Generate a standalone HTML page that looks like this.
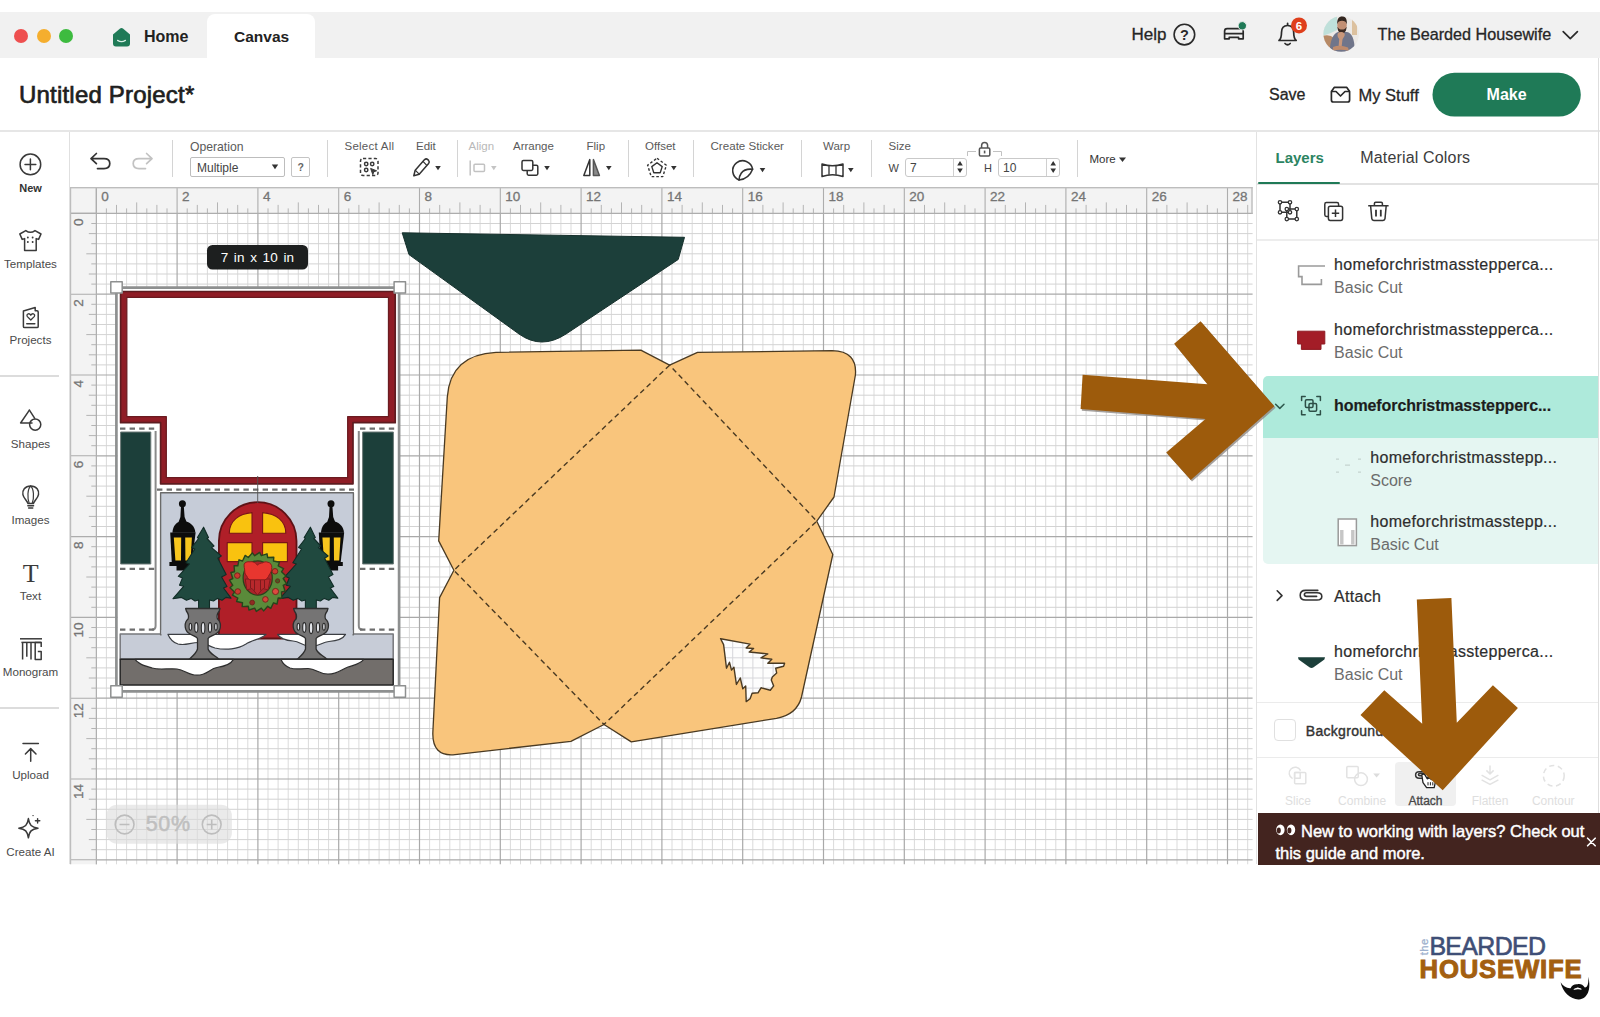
<!DOCTYPE html>
<html>
<head>
<meta charset="utf-8">
<title>Canvas</title>
<style>
*{box-sizing:border-box;margin:0;padding:0}
html,body{width:1600px;height:1017px;overflow:hidden;background:#fff}
body{font-family:"Liberation Sans",sans-serif;color:#222;position:relative}
svg{position:absolute;left:0;top:0;overflow:visible}
svg text{font-family:"Liberation Sans",sans-serif}
.t{position:absolute;white-space:nowrap;line-height:1}
.b{font-weight:bold}
#titlebar{position:absolute;left:0;top:12px;width:1600px;height:46px;background:#f1f1f1}
#tab{position:absolute;left:207px;top:14px;width:108px;height:46px;background:#fff;border-radius:8px 8px 0 0}
.dot{position:absolute;top:29px;width:14px;height:14px;border-radius:50%}
#hdrline{position:absolute;left:0;top:130px;width:1600px;height:2px;background:#e6e6e6}
#sidebar{position:absolute;left:0;top:132px;width:70px;height:732px;background:#fff;border-right:1px solid #e0e0e0}
.sb{position:absolute;left:0;width:61px;text-align:center;font-size:11px;color:#4a4a4a;line-height:1;white-space:nowrap}
.tl{position:absolute;font-size:11px;color:#5a5a5a;line-height:1;white-space:nowrap}
.vsep{position:absolute;top:140px;width:1px;height:37px;background:#d4d4d4}
#panel{position:absolute;left:1256px;top:132px;width:344px;height:732px;background:#fff;border-left:1px solid #e2e2e2}
.ln{position:absolute;font-size:16px;color:#2d2d2d;-webkit-text-stroke:.2px #2d2d2d;line-height:1;white-space:nowrap;letter-spacing:.31px}
.ls{position:absolute;font-size:16px;color:#6c6c6c;line-height:1;white-space:nowrap}
</style>
</head>
<body>
<div id="titlebar"></div>
<div id="tab"></div>
<div class="dot" style="left:14px;background:#ee4f4f"></div>
<div class="dot" style="left:37px;background:#f5ae2e"></div>
<div class="dot" style="left:59px;background:#3dbb3f"></div>
<svg width="1600" height="140" viewBox="0 0 1600 140">
<!-- home logo -->
<path d="M113 34.600 L119.800 28.700 Q121.500 27.300 123.200 28.700 L130 34.600 V43.600 Q130 46.500 127.100 46.500 H115.900 Q113 46.500 113 43.600 Z" fill="#1f7a57"/>
<path d="M117.600 40.400 Q121.500 43 125.400 40.400" fill="none" stroke="#d9f0e6" stroke-width="1.3" stroke-linecap="round"/>
<!-- help ? -->
<circle cx="1184.4" cy="34.6" r="10.3" fill="none" stroke="#2a2a2a" stroke-width="1.6"/>
<text x="1184.4" y="39.8" text-anchor="middle" font-size="14.5" font-weight="bold" fill="#2a2a2a">?</text>
<!-- machine -->
<g fill="none" stroke="#2a2a2a" stroke-width="1.700" stroke-linejoin="round" stroke-linecap="round">
<path d="M1224.600 38.800 V31.200 Q1224.600 28.700 1227.100 28.700 H1240.700 Q1243.200 28.700 1243.200 31.200 V38.800 H1238.600 V37.400 H1229.200 V38.800 Z"/>
<path d="M1224.800 33.700 H1243"/>
</g>
<circle cx="1242.3" cy="25.8" r="4.2" fill="#1f7a57" stroke="#f1f1f1" stroke-width="1"/>
<!-- bell -->
<g fill="none" stroke="#2a2a2a" stroke-width="1.7" stroke-linejoin="round" stroke-linecap="round">
<path d="M1279 40.5 C1281.5 38.5 1281.5 36 1281.5 32.5 C1281.5 28 1284 25.5 1287.6 25.5 C1291.2 25.5 1293.7 28 1293.7 32.5 C1293.7 36 1293.7 38.5 1296.2 40.5 Z"/>
<path d="M1285 43.500 Q1287.600 46 1290.200 43.500"/><path d="M1287.600 23.400 V25.200"/>
</g>
<circle cx="1299" cy="25.4" r="8" fill="#df3f1c"/>
<text x="1299" y="29.6" text-anchor="middle" font-size="11.5" font-weight="bold" fill="#fff">6</text>
<!-- avatar -->
<defs><clipPath id="av"><circle cx="1341.2" cy="34" r="17.8"/></clipPath></defs>
<g clip-path="url(#av)">
<rect x="1322" y="15" width="40" height="40" fill="#ece9e6"/>
<path d="M1322 15 H1337 V30 Q1330 34 1322 36 Z" fill="#bfe0da"/>
<path d="M1322 36 Q1330 34 1334 38 V55 H1322 Z" fill="#b78a66"/>
<rect x="1352" y="15" width="5" height="20" fill="#dcc19f"/>
<path d="M1330 55 C1329 42 1333 33.500 1338 32 H1347 C1352 33 1355.500 40 1354.500 55 Z" fill="#70758a"/>
<ellipse cx="1342" cy="25.200" rx="4.700" ry="6.200" fill="#c28f73"/>
<path d="M1337.100 24.500 C1337 18 1339.500 16.200 1342.200 16.200 C1345 16.200 1347.200 18 1346.900 24.500 C1346 21.500 1344.500 20.800 1342 20.800 C1339.500 20.800 1338 21.500 1337.100 24.500 Z" fill="#33261f"/>
<path d="M1337.400 26.500 C1337.600 31.500 1339.500 33.400 1342 33.400 C1344.500 33.400 1346.400 31.500 1346.600 26.500 C1345.500 29 1344 29.600 1342 29.600 C1340 29.600 1338.500 29 1337.400 26.500 Z" fill="#3d2c24"/>
<path d="M1338 33 C1339.500 31.600 1343 31.800 1344.500 33.500 C1345.500 36 1343 37.500 1342.400 40 L1341.600 47 L1338.600 46.500 L1339.200 39 C1337.500 37 1337 35 1338 33 Z" fill="#c8977b"/>
<path d="M1333 47 Q1340 44.500 1348 47.500 L1349 51 Q1340 48.500 1333 51 Z" fill="#bf8b6c"/>
</g>
<!-- chevron -->
<path d="M1563.2 31.6 L1570.3 38.6 L1577.4 31.6" fill="none" stroke="#2a2a2a" stroke-width="1.7" stroke-linecap="round" stroke-linejoin="round"/>
<!-- inbox -->
<g fill="none" stroke="#2a2a2a" stroke-width="1.7" stroke-linejoin="round">
<path d="M1331.4 91.5 L1334.2 87.4 H1346.8 L1349.6 91.5 V100 Q1349.6 102 1347.6 102 H1333.4 Q1331.400 102 1331.4 100 Z"/>
<path d="M1331.4 91.5 H1336 L1340.5 96 L1345 91.5 H1349.6"/>
</g>
<!-- make -->
<rect x="1432.5" y="72.8" width="148.3" height="43.8" rx="21.9" fill="#1f7a57"/>
<text x="1506.6" y="100.3" text-anchor="middle" font-size="16" font-weight="bold" fill="#fff">Make</text>
</svg>
<div class="t b" style="left:144px;top:28.5px;font-size:16px;color:#222">Home</div>
<div class="t b" style="left:234px;top:28.5px;font-size:15.5px;color:#222">Canvas</div>
<div class="t" style="left:1131.5px;top:25.5px;font-size:17px;color:#262626;-webkit-text-stroke:.3px #262626">Help</div>
<div class="t" style="left:1377.5px;top:26px;font-size:16.2px;color:#262626;-webkit-text-stroke:.3px #262626">The Bearded Housewife</div>
<div class="t" style="left:19px;top:82.500px;font-size:24px;color:#1e1e1e;-webkit-text-stroke:.7px #1e1e1e;letter-spacing:.2px">Untitled Project*</div>
<div class="t" style="left:1269px;top:87px;font-size:16px;color:#262626;-webkit-text-stroke:.3px #262626">Save</div>
<div class="t" style="left:1358.5px;top:86.5px;font-size:16.5px;color:#262626;-webkit-text-stroke:.3px #262626">My Stuff</div>
<div id="hdrline"></div>
<div style="position:absolute;left:1597.500px;top:58px;width:1.500px;height:75px;background:#dedede"></div>

<!-- canvas -->
<svg width="1600" height="1017" viewBox="0 0 1600 1017">
<defs><clipPath id="cv"><rect x="69.5" y="186" width="1183.6" height="678.6"/></clipPath></defs>
<g clip-path="url(#cv)">
<rect x="70" y="187" width="1182.6" height="677.6" fill="#fff"/>
<path d="M106.4 213.4V864.6M116.5 213.4V864.6M126.6 213.4V864.6M136.7 213.4V864.6M146.8 213.4V864.6M156.9 213.4V864.6M167.0 213.4V864.6M187.2 213.4V864.6M197.3 213.4V864.6M207.4 213.4V864.6M217.5 213.4V864.6M227.6 213.4V864.6M237.7 213.4V864.6M247.8 213.4V864.6M268.0 213.4V864.6M278.1 213.4V864.6M288.2 213.4V864.6M298.3 213.4V864.6M308.4 213.4V864.6M318.5 213.4V864.6M328.6 213.4V864.6M348.8 213.4V864.6M358.9 213.4V864.6M369.0 213.4V864.6M379.1 213.4V864.6M389.2 213.4V864.6M399.3 213.4V864.6M409.4 213.4V864.6M429.6 213.4V864.6M439.7 213.4V864.6M449.8 213.4V864.6M459.9 213.4V864.6M470.0 213.4V864.6M480.1 213.4V864.6M490.2 213.4V864.6M510.4 213.4V864.6M520.5 213.4V864.6M530.6 213.4V864.6M540.7 213.4V864.6M550.8 213.4V864.6M560.9 213.4V864.6M571.0 213.4V864.6M591.2 213.4V864.6M601.3 213.4V864.6M611.4 213.4V864.6M621.5 213.4V864.6M631.6 213.4V864.6M641.7 213.4V864.6M651.8 213.4V864.6M672.0 213.4V864.6M682.1 213.4V864.6M692.2 213.4V864.6M702.3 213.4V864.6M712.4 213.4V864.6M722.5 213.4V864.6M732.6 213.4V864.6M752.8 213.4V864.6M762.9 213.4V864.6M773.0 213.4V864.6M783.1 213.4V864.6M793.2 213.4V864.6M803.3 213.4V864.6M813.4 213.4V864.6M833.6 213.4V864.6M843.7 213.4V864.6M853.8 213.4V864.6M863.9 213.4V864.6M874.0 213.4V864.6M884.1 213.4V864.6M894.2 213.4V864.6M914.4 213.4V864.6M924.5 213.4V864.6M934.6 213.4V864.6M944.7 213.4V864.6M954.8 213.4V864.6M964.9 213.4V864.6M975.0 213.4V864.6M995.2 213.4V864.6M1005.3 213.4V864.6M1015.4 213.4V864.6M1025.5 213.4V864.6M1035.6 213.4V864.6M1045.7 213.4V864.6M1055.8 213.4V864.6M1076.0 213.4V864.6M1086.1 213.4V864.6M1096.2 213.4V864.6M1106.3 213.4V864.6M1116.4 213.4V864.6M1126.5 213.4V864.6M1136.6 213.4V864.6M1156.8 213.4V864.6M1166.9 213.4V864.6M1177.0 213.4V864.6M1187.1 213.4V864.6M1197.2 213.4V864.6M1207.3 213.4V864.6M1217.4 213.4V864.6M1237.6 213.4V864.6M1247.7 213.4V864.6" stroke="#dbdbdb" stroke-width="1" fill="none"/>
<path d="M96.3 223.5H1252.6M96.3 233.6H1252.6M96.3 243.7H1252.6M96.3 253.8H1252.6M96.3 263.9H1252.6M96.3 274.0H1252.6M96.3 284.1H1252.6M96.3 304.3H1252.6M96.3 314.4H1252.6M96.3 324.5H1252.6M96.3 334.6H1252.6M96.3 344.7H1252.6M96.3 354.8H1252.6M96.3 364.9H1252.6M96.3 385.1H1252.6M96.3 395.2H1252.6M96.3 405.3H1252.6M96.3 415.4H1252.6M96.3 425.5H1252.6M96.3 435.6H1252.6M96.3 445.7H1252.6M96.3 465.9H1252.6M96.3 476.0H1252.6M96.3 486.1H1252.6M96.3 496.2H1252.6M96.3 506.3H1252.6M96.3 516.4H1252.6M96.3 526.5H1252.6M96.3 546.7H1252.6M96.3 556.8H1252.6M96.3 566.9H1252.6M96.3 577.0H1252.6M96.3 587.1H1252.6M96.3 597.2H1252.6M96.3 607.3H1252.6M96.3 627.5H1252.6M96.3 637.6H1252.6M96.3 647.7H1252.6M96.3 657.8H1252.6M96.3 667.9H1252.6M96.3 678.0H1252.6M96.3 688.1H1252.6M96.3 708.3H1252.6M96.3 718.4H1252.6M96.3 728.5H1252.6M96.3 738.6H1252.6M96.3 748.7H1252.6M96.3 758.8H1252.6M96.3 768.9H1252.6M96.3 789.1H1252.6M96.3 799.2H1252.6M96.3 809.3H1252.6M96.3 819.4H1252.6M96.3 829.5H1252.6M96.3 839.6H1252.6M96.3 849.7H1252.6" stroke="#d3d3d3" stroke-width="1" fill="none"/>
<path d="M96.3 213.4V864.6M177.1 213.4V864.6M257.9 213.4V864.6M338.7 213.4V864.6M419.5 213.4V864.6M500.3 213.4V864.6M581.1 213.4V864.6M661.9 213.4V864.6M742.7 213.4V864.6M823.5 213.4V864.6M904.3 213.4V864.6M985.1 213.4V864.6M1065.9 213.4V864.6M1146.7 213.4V864.6M1227.5 213.4V864.6M96.3 213.4H1252.6M96.3 294.2H1252.6M96.3 375.0H1252.6M96.3 455.8H1252.6M96.3 536.6H1252.6M96.3 617.4H1252.6M96.3 698.2H1252.6M96.3 779.0H1252.6M96.3 859.8H1252.6" stroke="#a9a9a9" stroke-width="1.2" fill="none"/>
<rect x="70" y="187" width="1182.6" height="26.400000000000006" fill="#f3f3f3"/>
<rect x="70" y="187" width="26.299999999999997" height="677.6" fill="#f3f3f3"/>
<path d="M106.4 213.4v-5M116.5 213.4v-8.5M126.6 213.4v-5M136.7 213.4v-11M146.8 213.4v-5M156.9 213.4v-8.5M167.0 213.4v-5M187.2 213.4v-5M197.3 213.4v-8.5M207.4 213.4v-5M217.5 213.4v-11M227.6 213.4v-5M237.7 213.4v-8.5M247.8 213.4v-5M268.0 213.4v-5M278.1 213.4v-8.5M288.2 213.4v-5M298.3 213.4v-11M308.4 213.4v-5M318.5 213.4v-8.5M328.6 213.4v-5M348.8 213.4v-5M358.9 213.4v-8.5M369.0 213.4v-5M379.1 213.4v-11M389.2 213.4v-5M399.3 213.4v-8.5M409.4 213.4v-5M429.6 213.4v-5M439.7 213.4v-8.5M449.8 213.4v-5M459.9 213.4v-11M470.0 213.4v-5M480.1 213.4v-8.5M490.2 213.4v-5M510.4 213.4v-5M520.5 213.4v-8.5M530.6 213.4v-5M540.7 213.4v-11M550.8 213.4v-5M560.9 213.4v-8.5M571.0 213.4v-5M591.2 213.4v-5M601.3 213.4v-8.5M611.4 213.4v-5M621.5 213.4v-11M631.6 213.4v-5M641.7 213.4v-8.5M651.8 213.4v-5M672.0 213.4v-5M682.1 213.4v-8.5M692.2 213.4v-5M702.3 213.4v-11M712.4 213.4v-5M722.5 213.4v-8.5M732.6 213.4v-5M752.8 213.4v-5M762.9 213.4v-8.5M773.0 213.4v-5M783.1 213.4v-11M793.2 213.4v-5M803.3 213.4v-8.5M813.4 213.4v-5M833.6 213.4v-5M843.7 213.4v-8.5M853.8 213.4v-5M863.9 213.4v-11M874.0 213.4v-5M884.1 213.4v-8.5M894.2 213.4v-5M914.4 213.4v-5M924.5 213.4v-8.5M934.6 213.4v-5M944.7 213.4v-11M954.8 213.4v-5M964.9 213.4v-8.5M975.0 213.4v-5M995.2 213.4v-5M1005.3 213.4v-8.5M1015.4 213.4v-5M1025.5 213.4v-11M1035.6 213.4v-5M1045.7 213.4v-8.5M1055.8 213.4v-5M1076.0 213.4v-5M1086.1 213.4v-8.5M1096.2 213.4v-5M1106.3 213.4v-11M1116.4 213.4v-5M1126.5 213.4v-8.5M1136.6 213.4v-5M1156.8 213.4v-5M1166.9 213.4v-8.5M1177.0 213.4v-5M1187.1 213.4v-11M1197.2 213.4v-5M1207.3 213.4v-8.5M1217.4 213.4v-5M1237.6 213.4v-5M1247.7 213.4v-8.5M96.3 223.5h-5M96.3 233.6h-7.5M96.3 243.7h-5M96.3 253.8h-10M96.3 263.9h-5M96.3 274.0h-7.5M96.3 284.1h-5M96.3 304.3h-5M96.3 314.4h-7.5M96.3 324.5h-5M96.3 334.6h-10M96.3 344.7h-5M96.3 354.8h-7.5M96.3 364.9h-5M96.3 385.1h-5M96.3 395.2h-7.5M96.3 405.3h-5M96.3 415.4h-10M96.3 425.5h-5M96.3 435.6h-7.5M96.3 445.7h-5M96.3 465.9h-5M96.3 476.0h-7.5M96.3 486.1h-5M96.3 496.2h-10M96.3 506.3h-5M96.3 516.4h-7.5M96.3 526.5h-5M96.3 546.7h-5M96.3 556.8h-7.5M96.3 566.9h-5M96.3 577.0h-10M96.3 587.1h-5M96.3 597.2h-7.5M96.3 607.3h-5M96.3 627.5h-5M96.3 637.6h-7.5M96.3 647.7h-5M96.3 657.8h-10M96.3 667.9h-5M96.3 678.0h-7.5M96.3 688.1h-5M96.3 708.3h-5M96.3 718.4h-7.5M96.3 728.5h-5M96.3 738.6h-10M96.3 748.7h-5M96.3 758.8h-7.5M96.3 768.9h-5M96.3 789.1h-5M96.3 799.2h-7.5M96.3 809.3h-5M96.3 819.4h-10M96.3 829.5h-5M96.3 839.6h-7.5M96.3 849.7h-5" stroke="#b4b4b4" stroke-width="1" fill="none"/>
<path d="M96.3 187V213.4M177.1 187V213.4M257.9 187V213.4M338.7 187V213.4M419.5 187V213.4M500.3 187V213.4M581.1 187V213.4M661.9 187V213.4M742.7 187V213.4M823.5 187V213.4M904.3 187V213.4M985.1 187V213.4M1065.9 187V213.4M1146.7 187V213.4M1227.5 187V213.4M70 213.4H96.3M70 294.2H96.3M70 375.0H96.3M70 455.8H96.3M70 536.6H96.3M70 617.4H96.3M70 698.2H96.3M70 779.0H96.3M70 859.8H96.3" stroke="#adadad" stroke-width="1.1" fill="none"/>
<path d="M70 213.4H1252.6M96.3 187V864.6" stroke="#adadad" stroke-width="1.1" fill="none"/>
<rect x="70" y="186.4" width="1182.6" height="2" fill="#bdbdbd"/>
<path d="M70.5 187V864.6M1252.0 187V213.4" stroke="#bdbdbd" stroke-width="1.4" fill="none"/>
<text x="101.3" y="201.2" font-size="13.5" fill="#757575" stroke="#757575" stroke-width=".3">0</text>
<text x="182.1" y="201.2" font-size="13.5" fill="#757575" stroke="#757575" stroke-width=".3">2</text>
<text x="262.9" y="201.2" font-size="13.5" fill="#757575" stroke="#757575" stroke-width=".3">4</text>
<text x="343.7" y="201.2" font-size="13.5" fill="#757575" stroke="#757575" stroke-width=".3">6</text>
<text x="424.5" y="201.2" font-size="13.5" fill="#757575" stroke="#757575" stroke-width=".3">8</text>
<text x="505.3" y="201.2" font-size="13.5" fill="#757575" stroke="#757575" stroke-width=".3">10</text>
<text x="586.1" y="201.2" font-size="13.5" fill="#757575" stroke="#757575" stroke-width=".3">12</text>
<text x="666.9" y="201.2" font-size="13.5" fill="#757575" stroke="#757575" stroke-width=".3">14</text>
<text x="747.7" y="201.2" font-size="13.5" fill="#757575" stroke="#757575" stroke-width=".3">16</text>
<text x="828.5" y="201.2" font-size="13.5" fill="#757575" stroke="#757575" stroke-width=".3">18</text>
<text x="909.3" y="201.2" font-size="13.5" fill="#757575" stroke="#757575" stroke-width=".3">20</text>
<text x="990.1" y="201.2" font-size="13.5" fill="#757575" stroke="#757575" stroke-width=".3">22</text>
<text x="1070.9" y="201.2" font-size="13.5" fill="#757575" stroke="#757575" stroke-width=".3">24</text>
<text x="1151.7" y="201.2" font-size="13.5" fill="#757575" stroke="#757575" stroke-width=".3">26</text>
<text x="1232.5" y="201.2" font-size="13.5" fill="#757575" stroke="#757575" stroke-width=".3">28</text>
<text transform="translate(83.4 218.4) rotate(-90)" text-anchor="end" font-size="13.5" fill="#757575" stroke="#757575" stroke-width=".3">0</text>
<text transform="translate(83.4 299.2) rotate(-90)" text-anchor="end" font-size="13.5" fill="#757575" stroke="#757575" stroke-width=".3">2</text>
<text transform="translate(83.4 380.0) rotate(-90)" text-anchor="end" font-size="13.5" fill="#757575" stroke="#757575" stroke-width=".3">4</text>
<text transform="translate(83.4 460.8) rotate(-90)" text-anchor="end" font-size="13.5" fill="#757575" stroke="#757575" stroke-width=".3">6</text>
<text transform="translate(83.4 541.6) rotate(-90)" text-anchor="end" font-size="13.5" fill="#757575" stroke="#757575" stroke-width=".3">8</text>
<text transform="translate(83.4 622.4) rotate(-90)" text-anchor="end" font-size="13.5" fill="#757575" stroke="#757575" stroke-width=".3">10</text>
<text transform="translate(83.4 703.2) rotate(-90)" text-anchor="end" font-size="13.5" fill="#757575" stroke="#757575" stroke-width=".3">12</text>
<text transform="translate(83.4 784.0) rotate(-90)" text-anchor="end" font-size="13.5" fill="#757575" stroke="#757575" stroke-width=".3">14</text>
<text transform="translate(83.4 864.8) rotate(-90)" text-anchor="end" font-size="13.5" fill="#757575" stroke="#757575" stroke-width=".3">16</text>
<!-- green flap -->
<path d="M402.2 232.8 L684.5 237.3 L678.2 259.5 L566 334 Q541.5 350 519 334 L409 254.6 Z" fill="#1c3f3a" stroke="#16302c" stroke-width="1" stroke-linejoin="round"/>
<!-- envelope -->
<g stroke-linejoin="round">
<path d="M496 352.400 L640.8 350.2 L669.6 365.2 L697.5 352.4 L832 350.7 Q857.5 351 855.4 375 L834 497 L816.8 521.2 L832.8 554.5 L801.5 697 Q797 714.5 776.5 718.3 L631.3 741.9 L604 724.5 L570.9 741.3 L455 754.6 Q431.5 757 432.9 731.3 L439.6 597.6 L453.9 570.3 L438.7 540.9 L447.3 397 Q450.5 354.6 496 352.4 Z" fill="#f9c57c" stroke="#4a3a22" stroke-width="1.3"/>
<path d="M669.6 365.2 L453.9 570.3 L604 724.5 L816.8 521.2 Z" fill="none" stroke="#4a3a22" stroke-width="1.4" stroke-dasharray="5.2 3.6"/>
<!-- tree cut-out -->
<clipPath id="tc"><path d="M720.6 638.7 L750.1 644.1 L746.2 648 L753.6 648.5 L749.2 652 L767.8 653.9 L761 657.9 L771.8 659.3 L767.8 663.3 L784.6 663.3 L783.6 666.2 L775.7 668.2 L776.7 673.1 L772.3 677 L771.3 680 L773.7 685.9 L770.3 690.3 L761 687.8 L758 692.8 L752.1 693.3 L750.1 698.7 L746.2 701.6 L745.7 685.9 L742.8 688.8 L740.3 678 L736.4 684.4 L733.9 667.2 L731.5 670.1 L729.5 662.3 L726.5 668.2 L723.6 644.6 Z"/></clipPath>
<path d="M720.6 638.7 L750.1 644.1 L746.2 648 L753.6 648.5 L749.2 652 L767.8 653.9 L761 657.9 L771.8 659.3 L767.8 663.3 L784.6 663.3 L783.6 666.2 L775.7 668.2 L776.7 673.1 L772.3 677 L771.3 680 L773.7 685.9 L770.3 690.3 L761 687.8 L758 692.8 L752.1 693.3 L750.1 698.7 L746.2 701.6 L745.7 685.9 L742.8 688.8 L740.3 678 L736.4 684.4 L733.9 667.2 L731.5 670.1 L729.5 662.3 L726.5 668.2 L723.6 644.6 Z" fill="#fdfdfd"/>
<g clip-path="url(#tc)"><path d="M732.700 630V710M742.800 630V710M752.900 630V710M763 630V710M773.100 630V710M715 647.700H790M715 657.800H790M715 667.900H790M715 678H790M715 688.100H790M715 698.200H790" stroke="#d6d6da" stroke-width="1" fill="none"/></g>
<path d="M720.6 638.7 L750.1 644.1 L746.2 648 L753.6 648.5 L749.2 652 L767.8 653.9 L761 657.9 L771.8 659.3 L767.8 663.3 L784.6 663.3 L783.6 666.2 L775.7 668.2 L776.7 673.1 L772.3 677 L771.3 680 L773.7 685.9 L770.3 690.3 L761 687.8 L758 692.8 L752.1 693.3 L750.1 698.7 L746.2 701.6 L745.7 685.9 L742.8 688.8 L740.3 678 L736.4 684.4 L733.9 667.2 L731.5 670.1 L729.5 662.3 L726.5 668.2 L723.6 644.6 Z" fill="none" stroke="#4a3a22" stroke-width="1.400"/>
</g>
<!-- ===== CARD ===== -->
<g stroke-linejoin="round">
<!-- base white card + outline -->
<rect x="117.500" y="288.500" width="281" height="401.500" fill="#fff"/>
<!-- side panels outlines -->
<path d="M155.600 431 V626 Q155.600 629.500 152 629.500 M358.800 431 V626 Q358.800 629.500 362.400 629.500" fill="none" stroke="#8a8a8a" stroke-width="2"/>

<!-- dashed score lines -->
<g stroke="#6e6e6e" stroke-width="2.200" stroke-dasharray="5.400 4.200" fill="none">
<path d="M120 428.6H156"/><path d="M360 428.6H397"/>
<path d="M157 489.6H354"/>
<path d="M120 568.9H155"/><path d="M360 568.9H397"/>
<path d="M120 629.6H155"/><path d="M360 629.6H397"/>
</g>
<!-- green side rects -->
<rect x="120.6" y="432" width="30.2" height="132" fill="#1c3f3a" stroke="#6d7a78" stroke-width="1"/>
<rect x="362.6" y="432" width="30.8" height="132" fill="#1c3f3a" stroke="#6d7a78" stroke-width="1"/>
<!-- red frame -->
<path d="M120.600 291.500H395.200V422.700H353V483.800H160.600V422.700H120.600Z" fill="#8f1d26" stroke="#5e1c20" stroke-width="1.700"/>
<path d="M126.800 297.300H388.500V416.600H347.700V477.700H166.300V416.600H126.800Z" fill="#fff" stroke="#6a1b20" stroke-width="1.300"/>
<!-- blue-grey base + main panel -->
<rect x="120.200" y="634" width="273" height="25" fill="#c7ccd7" stroke="#77787c" stroke-width="1.500"/>
<rect x="160.6" y="492.8" width="192.8" height="142" fill="#c6ccd8" stroke="#6a6a6a" stroke-width="1.4"/>
<rect x="161.5" y="630" width="191" height="8" fill="#c6ccd8"/>
<!-- floor -->
<rect x="120.200" y="659.300" width="273" height="25.800" fill="#726e6b" stroke="#262626" stroke-width="1.500"/>
<!-- door -->
<path d="M218.900 638.500 V541 A38.800 38.800 0 0 1 296.500 541 V638.500 Z" fill="#b01f28" stroke="#5e1216" stroke-width="1.800"/>
<!-- window panes -->
<g fill="#f9c20f" stroke="#7a1418" stroke-width="1.1">
<path d="M229.3 533.2 C229.3 521 239 513.5 252 512.6 V533.2 Z"/>
<path d="M285.8 533.2 C285.8 521 276 513.5 262.6 512.6 V533.2 Z"/>
<rect x="227.2" y="542.6" width="24.8" height="19"/>
<rect x="262.6" y="542.6" width="24.8" height="19"/>
</g>
<!-- snow on base -->
<g fill="#fff" stroke="#3c3f44" stroke-width="1.200">
<path d="M168 634.4 H266 C262 639 252 640 246 644 C238 649 226 650.5 215 648 C208 646 205 642.5 199 642.5 C190 642.5 186 646 178 644 C172 642 169.5 638 168 634.4 Z"/>
<path d="M277.6 634.4 H345.5 C343 639 336 641 329 641.5 C322 642 318 647 310 646.5 C303 646 300 641.5 293 641 C286 640.5 280 638.5 277.6 634.4 Z"/>
</g>
<!-- snow on floor -->
<g fill="#fff" stroke="#2e2e2e" stroke-width="1.200">
<path d="M135 659.4 H233.5 C231 664 224 666.500 217 667.500 C210 668.500 207 675.200 197 675.200 C188 675.200 185 670 177 669 C168 668 160 670.500 152 668 C144 665.500 138 664 135 659.400 Z"/>
<path d="M281 659.4 H363.6 C361 664 354 665 348 667 C341 669.500 338 674.200 328 674.200 C319 674.200 316 668.500 308 668.500 C300 668.500 296 670 290 668 C285 666 282.500 663 281 659.400 Z"/>
</g>
<!-- lanterns -->
<g id="lantern">
<circle cx="182.400" cy="503.800" r="3.500" fill="#0c0c0c"/>
<path d="M181 506 L180.400 517 L178.600 522 H186.600 L184.600 517 L183.800 506 Z" fill="#0c0c0c"/>
<path d="M172.400 532.800 C172.800 526 176.500 521.300 182.600 521.300 H183.400 C189.500 521.300 195 526 195.400 532.800 Z" fill="#0c0c0c"/>
<path d="M170.200 532.400 H195.600 L192 562.800 H171.800 Z" fill="#0c0c0c"/>
<path d="M173.800 537.400 H181.200 L181 560.400 H175.400 Z M185.200 537.400 H191.900 L190.600 560.400 H185.400 Z" fill="#f7c51e"/>
<path d="M169.400 562 H194.200 V566 H189.500 V570.400 H176.500 V566 H169.400 Z" fill="#0c0c0c"/>
</g>
<use href="#lantern" transform="translate(148.6 0)"/>
<!-- trees -->
<g id="tree">
<path d="M203.600 527.200 L208.500 537.500 L207 538.500 L214 546 L211.600 547.600 L221.300 556 L217.800 558.200 L226.200 574.600 L221.600 577 L227 586.500 L223.500 588 L231 598.200 L226 597.400 L222 600.200 L217.500 598.400 L213.500 601 L209.500 600 V608.700 H198.600 V600 L195 601 L191 598.400 L186.500 600.200 L181.500 597.400 L173 598.700 L183.600 586.300 L179.500 585.200 L182.400 578.100 L178.300 576.300 L189.500 564 L186 562.800 L194.800 549 L191.800 547.400 L198.600 538.500 L197.400 537.500 Z" fill="#20493f" stroke="#112c26" stroke-width="1.100"/>
</g>
<use href="#tree" transform="translate(106.8 0)"/>
<!-- urns -->
<g id="urn">
<path d="M185.600 608.500 H220 L219.200 611 C217 614 216.500 616.500 217.500 619 C221.500 622 221.500 630 217 633 C213 636 209 636.500 208.100 638.500 V649 C209 653 214 655 218.800 659 H189.400 C194 655 196.500 653 197.500 649 V638.500 C196.600 636.500 192.600 636 188.600 633 C184.100 630 184.100 622 188.100 619 C189.100 616.500 188.600 614 186.400 611 Z" fill="#757474" stroke="#2e2e2e" stroke-width="1.300"/>
<g fill="#e2e4e9" stroke="#2a2a2a" stroke-width="1.100">
<ellipse cx="190.400" cy="626.800" rx="1.300" ry="3.500"/><ellipse cx="196.300" cy="627.500" rx="1.600" ry="4.900"/><ellipse cx="203.100" cy="628" rx="1.800" ry="5.600"/><ellipse cx="210" cy="627.500" rx="1.600" ry="4.900"/><ellipse cx="215.900" cy="626.800" rx="1.300" ry="3.500"/>
</g>
</g>
<use href="#urn" transform="translate(108 0)"/>
<!-- wreath -->
<g>
<path d="M259.7 552.4 L261.3 555.7 L267.0 553.8 L267.7 557.5 L273.8 557.2 L273.5 561.0 L279.4 562.3 L278.2 565.8 L283.6 568.7 L281.5 571.8 L286.0 576.0 L283.2 578.5 L286.5 583.7 L283.2 585.3 L285.1 591.3 L281.5 592.0 L281.9 598.2 L278.2 598.0 L277.0 604.0 L273.5 602.8 L270.8 608.4 L267.7 606.3 L263.7 610.9 L261.3 608.1 L256.3 611.4 L254.7 608.1 L249.0 610.0 L248.3 606.3 L242.2 606.6 L242.5 602.8 L236.6 601.5 L237.8 598.0 L232.4 595.1 L234.5 592.0 L230.0 587.8 L232.8 585.3 L229.5 580.1 L232.8 578.5 L230.9 572.5 L234.5 571.8 L234.1 565.6 L237.8 565.8 L239.0 559.8 L242.5 561.0 L245.2 555.4 L248.3 557.5 L252.3 552.9 L254.7 555.7 Z" fill="#5a8a3a" stroke="#27441b" stroke-width="1.400"/>
<ellipse cx="257.700" cy="578" rx="14.600" ry="17.200" fill="#a9232a" stroke="#27441b" stroke-width="1.200"/>
<g stroke="#6e2418" stroke-width="0.900"><circle cx="237.3" cy="575.6" r="2.8" fill="#c9392f"/><circle cx="237.8" cy="591.5" r="2.8" fill="#c9392f"/><circle cx="252.2" cy="602.6" r="2.4" fill="#8f2a22"/><circle cx="265.4" cy="599.4" r="2.8" fill="#d2453a"/><circle cx="275.5" cy="591.5" r="3.1" fill="#dc4a40"/><circle cx="277.6" cy="580.9" r="2.1" fill="#4a5a22"/><circle cx="275" cy="571.3" r="2.8" fill="#c9392f"/></g>
<!-- bow tails -->
<path d="M245.300 579 H270.200 L268.100 589.900 L263 588.500 L257.500 595 L252 588.500 L246.800 589.900 Z" fill="#b8282c" stroke="#7c1a1c" stroke-width="0.900"/>
<path d="M250.500 580 V588 M254.500 580 V590.500 M260.500 580 V590.500 M264.500 580 V588" stroke="#7c1a1c" stroke-width="1" fill="none"/>
<!-- bow loops -->
<path d="M257.500 565.200 C255 562 252 561.300 250 561.800 C247 561.300 244.600 562.500 244.200 564.200 C243.800 566.500 244.700 568.500 244.700 570.800 C244.700 573 245.500 575 246.800 576.100 C247.500 578 248.800 579.500 250 579.800 H264.900 C266.500 579.500 268.200 577.500 269.100 575 C270.800 573 271.800 570 271.800 567.600 C272 565 270.500 562.800 268.100 562.300 C266 561.500 264 561.800 262.800 562.800 C260.500 563 258.500 564 257.500 565.200 Z" fill="#e8362f" stroke="#8a1c1c" stroke-width="1"/>
</g>
<!-- centre guide -->
<path d="M257.7 476 V503" stroke="#555" stroke-width="0.9"/>
<!-- selection box -->
<rect x="116.400" y="287.600" width="282.700" height="403.800" fill="none" stroke="#8e9090" stroke-width="2.700"/>
<g fill="#fff" stroke="#8e9090" stroke-width="1.500">
<rect x="110.800" y="281.700" width="11.400" height="11.400"/><rect x="394.100" y="281.700" width="11.400" height="11.400"/>
<rect x="110.800" y="685.800" width="11.400" height="11.400"/><rect x="394.100" y="685.800" width="11.400" height="11.400"/>
</g>
</g>
<!-- size tooltip -->
<rect x="207" y="245" width="101" height="24.5" rx="5.5" fill="#1d1f1f"/>
<text x="257.5" y="262" text-anchor="middle" font-size="13.5" fill="#fff" style="word-spacing:1.5px;letter-spacing:.2px">7 in x 10 in</text>
<!-- zoom control -->
<rect x="106.300" y="804.800" width="125.600" height="38.900" rx="11" fill="#dcdcdc" opacity=".6"/>
<g fill="none" stroke="#bdbdbd" stroke-width="1.6"><circle cx="124.600" cy="824.500" r="9.400"/><path d="M119.5 824.5h10"/><circle cx="211.700" cy="824.500" r="9.400"/><path d="M206.700 824.500h10M211.700 819.500v10"/></g>
<text x="168.200" y="831.300" text-anchor="middle" font-size="21.500" fill="#bfbfbf" stroke="#bfbfbf" stroke-width=".5" letter-spacing=".6">50%</text>

</g>
</svg>
<div id="sidebar"></div>
<div style="position:absolute;left:0;top:375px;width:59px;height:1.5px;background:#dcdcdc"></div>
<div style="position:absolute;left:0;top:707px;width:59px;height:1.5px;background:#dcdcdc"></div>
<svg width="70" height="1017" viewBox="0 0 70 1017">
<g fill="none" stroke="#3a3a3a" stroke-width="1.5" stroke-linecap="round" stroke-linejoin="round">
<!-- new -->
<circle cx="30.4" cy="164.4" r="10.3"/><path d="M25 164.4h10.8M30.4 159v10.8"/>
<!-- templates (tshirt) -->
<path d="M25.8 230.6 Q30.4 234 35 230.6 L41 234 L38.6 239.4 L36.2 238.6 V250.4 H24.6 V238.6 L22.2 239.4 L19.8 234 Z"/>
<path d="M27.8 237.5h.1M32.6 237.5h.1M27.8 242h.1M32.6 242h.1" stroke-width="1.8"/>
<!-- projects -->
<path d="M23.4 311 L35.2 307.5 V310.8 H37 Q38.2 310.8 38.2 312 V326.4 Q38.2 327.6 37 327.6 H24.6 Q23.4 327.6 23.4 326.4 Z"/>
<path d="M30.8 320 L27.4 316.6 Q26.2 314.6 28.2 313.8 Q29.8 313.4 30.8 315.2 Q31.8 313.4 33.4 313.8 Q35.4 314.6 34.2 316.6 Z" stroke-width="1.3"/>
<path d="M26.8 323.8 H34.8" stroke-width="1.6"/>
<!-- shapes -->
<path d="M29.4 410.2 L20.6 423 H32"/><circle cx="35.2" cy="424.6" r="5.6"/><path d="M29.4 410.2 L34.6 418.2"/>
<!-- images (balloon) -->
<path d="M30.7 486 C24.6 486 22.2 490.6 22.9 494.6 C23.7 498.6 27.2 500.8 28 503.6 H33.4 C34.2 500.8 37.7 498.6 38.5 494.6 C39.200 490.600 36.800 486 30.700 486 Z"/>
<path d="M30.7 486 C27.4 489 27.2 498 29.2 503.400 M30.700 486 C34 489 34.200 498 32.200 503.400" stroke-width="1.2"/>
<path d="M27.8 505.800 H33.600 M28.600 508 H32.800" stroke-width="1.4"/>
<!-- upload -->
<path d="M23 743.400 H38.400 M30.700 761.200 V748.800 M25.400 754 L30.700 748.600 L36 754"/>
<!-- create ai -->
<path d="M28.400 818.600 C29.400 825.200 31.400 827.200 38 828.200 C31.400 829.200 29.400 831.200 28.400 837.800 C27.400 831.200 25.400 829.200 18.800 828.200 C25.400 827.200 27.400 825.200 28.400 818.600 Z"/>
<path d="M37.600 818.600 v4.400 M35.400 820.800 h4.400 M33 815.600 h.1" stroke-width="1.400"/>
</g>
<!-- text T -->
<text x="30.700" y="582.400" text-anchor="middle" font-size="26" fill="#3a3a3a" style="font-family:'Liberation Serif',serif">T</text>
<!-- monogram -->
<g fill="none" stroke="#3a3a3a" stroke-width="1.500" stroke-linejoin="round">
<path d="M20 638.800 H42"/>
<path d="M21.400 642.400 H41.400"/>
<path d="M22.600 642.400 V659.400 M26.800 642.400 V656.800 M31 642.400 V659.400"/>
<path d="M41.200 647 V642.400 H35.200 V659.400 H41.200 V651.400 H37.800"/>
</g>
</svg>
<div class="sb b" style="top:182.500px;color:#333;left:0">New</div>
<div class="sb" style="top:257.5px;font-size:11.600px">Templates</div>
<div class="sb" style="top:333.5px;font-size:11.600px">Projects</div>
<div class="sb" style="top:437.5px;font-size:11.600px">Shapes</div>
<div class="sb" style="top:513.5px;font-size:11.600px">Images</div>
<div class="sb" style="top:589.5px;font-size:11.600px">Text</div>
<div class="sb" style="top:665.5px;font-size:11.600px">Monogram</div>
<div class="sb" style="top:769.0px;font-size:11.600px">Upload</div>
<div class="sb" style="top:845.5px;font-size:11.600px">Create AI</div>

<div style="position:absolute;left:70px;top:132px;width:1186px;height:55px;background:#fff"></div>
<div class="vsep" style="left:172px"></div>
<div class="vsep" style="left:327px"></div>
<div class="vsep" style="left:457px"></div>
<div class="vsep" style="left:628px"></div>
<div class="vsep" style="left:693px"></div>
<div class="vsep" style="left:801px"></div>
<div class="vsep" style="left:870.500px"></div>
<div class="vsep" style="left:1077px"></div>
<div class="tl" style="left:190px;top:140.500px;font-size:12.200px">Operation</div>
<div class="tl" style="left:344.500px;top:140.500px;font-size:11.500px;letter-spacing:.25px">Select All</div>
<div class="tl" style="left:416px;top:140.500px;font-size:11.500px">Edit</div>
<div class="tl" style="left:468.500px;top:140.500px;font-size:11.500px;color:#b9b9b9">Align</div>
<div class="tl" style="left:513px;top:140.500px;font-size:11.500px">Arrange</div>
<div class="tl" style="left:586.500px;top:140.500px;font-size:11.500px">Flip</div>
<div class="tl" style="left:645px;top:140.500px;font-size:11.500px">Offset</div>
<div class="tl" style="left:710.500px;top:139.800px;font-size:11.600px">Create Sticker</div>
<div class="tl" style="left:823px;top:140.500px;font-size:11.500px">Warp</div>
<div class="tl" style="left:888.500px;top:140.500px;font-size:11.500px">Size</div>
<div class="tl" style="left:888.500px;top:162.500px;font-size:11px;color:#444">W</div>
<div class="tl" style="left:984px;top:162.500px;font-size:11px;color:#444">H</div>
<div class="tl" style="left:1089.500px;top:154px;font-size:11.500px;color:#333">More</div>
<!-- operation select -->
<div style="position:absolute;left:189.800px;top:157.200px;width:95px;height:19.500px;border:1px solid #bdbdbd;border-radius:2px;background:#fff"></div>
<div class="tl" style="left:197px;top:161.500px;font-size:12px;color:#444">Multiple</div>
<div style="position:absolute;left:290.600px;top:157.200px;width:19.800px;height:19.500px;border:1px solid #c4c4c4;border-radius:2px;background:#fff"></div>
<div class="tl b" style="left:297.600px;top:162px;font-size:10.500px;color:#666">?</div>
<!-- size inputs -->
<div style="position:absolute;left:905px;top:157.500px;width:61.500px;height:19px;border:1px solid #c9c9c9;border-radius:3px;background:#fff"></div>
<div style="position:absolute;left:952.500px;top:158.500px;width:1px;height:17px;background:#d0d0d0"></div>
<div class="tl" style="left:910px;top:161.500px;font-size:12px;color:#444">7</div>
<div style="position:absolute;left:997.500px;top:157.500px;width:62.500px;height:19px;border:1px solid #c9c9c9;border-radius:3px;background:#fff"></div>
<div style="position:absolute;left:1046px;top:158.500px;width:1px;height:17px;background:#d0d0d0"></div>
<div class="tl" style="left:1003px;top:161.500px;font-size:12px;color:#444">10</div>
<svg width="1600" height="200" viewBox="0 0 1600 200">
<g fill="#333">
<path d="M271.800 164.500h6.400l-3.200 4.800z"/>
<path d="M957.200 165.500l2.800-4.500 2.800 4.500zM957.200 168.500l2.800 4.500 2.800-4.500z"/>
<path d="M1050.400 165.500l2.800-4.500 2.800 4.500zM1050.400 168.500l2.800 4.500 2.800-4.500z"/>
<path d="M435.200 166h5.600l-2.800 4.200z"/>
<path d="M544.200 166h5.600l-2.800 4.200z"/>
<path d="M606 166h5.600l-2.800 4.200z"/>
<path d="M671 166h5.600l-2.800 4.200z"/>
<path d="M759.700 168h5.600l-2.800 4.200z"/>
<path d="M848 168h5.600l-2.800 4.200z"/>
<path d="M1119 157.500h7l-3.500 4.400z"/>
</g>
<path d="M491 166h5.600l-2.800 4.200z" fill="#c4c4c4"/>
<!-- undo -->
<g fill="none" stroke="#333" stroke-width="1.700" stroke-linecap="round" stroke-linejoin="round">
<path d="M96.400 153.500 L91 158.600 L96.400 163.700 M91.500 158.600 H104 Q109.800 158.600 109.800 163.600 Q109.800 168.600 104 168.600 H97.500"/>
</g>
<g fill="none" stroke="#c2c2c2" stroke-width="1.700" stroke-linecap="round" stroke-linejoin="round">
<path d="M146.600 153.500 L152 158.600 L146.600 163.700 M151.500 158.600 H139 Q133.200 158.600 133.200 163.600 Q133.200 168.600 139 168.600 H145.500"/>
</g>
<!-- select all -->
<g fill="none" stroke="#3a3a3a" stroke-width="1.500">
<rect x="360.500" y="158.500" width="17.500" height="17" rx="2.500" stroke-dasharray="3.200 2.200"/>
<circle cx="366.200" cy="164" r="1.700"/><circle cx="372.200" cy="164" r="1.700"/><circle cx="366.200" cy="170" r="1.700"/>
<path d="M370.600 168.400 L376.600 170.800 L373.800 171.800 L372.800 174.600 Z" fill="#3a3a3a" stroke-width="1"/>
</g>
<!-- edit pencil -->
<g fill="none" stroke="#333" stroke-width="1.500" stroke-linejoin="round">
<path d="M413.800 175.800 L415.200 170.200 L424.600 159.600 Q426.200 158.200 427.800 159.600 L428.600 160.400 Q430 162 428.600 163.600 L419.200 174.200 Z"/>
<path d="M415.200 170.200 L419.200 174.200 M423 161.400 L426.800 165.400" stroke-width="1.200"/>
</g>
<!-- align (disabled) -->
<g fill="none" stroke="#c2c2c2" stroke-width="1.500"><path d="M470.200 160.500 V175.500"/><rect x="474" y="164.200" width="10.500" height="7.200" rx="1"/></g>
<!-- arrange -->
<g fill="none" stroke="#333" stroke-width="1.500" stroke-linejoin="round">
<rect x="522" y="160.600" width="10.800" height="9.800" rx="1.400"/>
<path d="M532.800 165.200 H536.400 Q537.800 165.200 537.800 166.600 V173.800 Q537.800 175.200 536.400 175.200 H528.600 Q527.200 175.200 527.200 173.800 V170.400"/>
</g>
<!-- flip -->
<g fill="none" stroke="#333" stroke-width="1.500" stroke-linejoin="round">
<path d="M589.800 159.600 V175.600 H583.800 Z"/>
<path d="M593.400 159.600 V175.600 H599.400 Z" fill="#8a8a8a" stroke="#555"/>
</g>
<!-- offset -->
<g fill="none" stroke="#333" stroke-width="1.400" stroke-linejoin="round">
<path d="M657 162.800 L662.200 166.600 L660.200 172.800 H653.800 L651.800 166.600 Z"/>
<path d="M657 158.200 L666.400 165.200 L662.800 176.600 H651.200 L647.600 165.200 Z" stroke-dasharray="2.600 2"/>
</g>
<!-- create sticker -->
<g fill="none" stroke="#333" stroke-width="1.600" stroke-linejoin="round" stroke-linecap="round">
<path d="M739 180 A10 10 0 1 1 752.600 169.200"/>
<path d="M752.600 169.200 Q744.600 168.400 741.200 173.200 Q739 176.400 739 180 Q748.800 179 752.600 169.200 Z"/>
</g>
<!-- warp -->
<g fill="none" stroke="#333" stroke-width="1.500" stroke-linejoin="round">
<path d="M822 164 Q832.500 167.600 843 164 V176.500 Q832.500 172.900 822 176.500 Z"/>
<path d="M829 165.600 V174.800 M836 165.600 V174.800" stroke-width="1.300"/>
</g>
<!-- lock -->
<g fill="none" stroke="#555" stroke-width="1.500" stroke-linejoin="round">
<rect x="979.400" y="148" width="10.400" height="8" rx="1.200"/>
<path d="M981.600 148 V145.600 Q981.600 142.400 984.600 142.400 Q987.600 142.400 987.600 145.600 V148"/>
<path d="M984.600 150.600 V153.400" stroke-width="1.600"/>
</g>
<g fill="none" stroke="#c2c2c2" stroke-width="1"><path d="M967.500 156 V151.500 H976 M1001.500 156 V151.500 H993"/></g>
</svg>

<div id="panel"></div>
<div style="position:absolute;left:1597.500px;top:58px;width:1.500px;height:806px;background:#dedede"></div>
<!-- tabs -->
<div style="position:absolute;left:1257px;top:183px;width:341px;height:1.500px;background:#e2e2e2"></div>
<div style="position:absolute;left:1258px;top:181.600px;width:82.400px;height:2.700px;background:#1f7a57;border-radius:1px"></div>
<div class="t b" style="left:1275.500px;top:150.300px;font-size:15px;color:#2b8462">Layers</div>
<div class="t" style="left:1360.300px;top:149.800px;font-size:16px;color:#3c3c3c;letter-spacing:.16px">Material Colors</div>
<div style="position:absolute;left:1257px;top:239px;width:341px;height:1.500px;background:#ededed"></div>
<!-- selected group bg -->
<div style="position:absolute;left:1262.500px;top:375.800px;width:335px;height:62.400px;background:#aeeadb;border-radius:5px 0 0 0"></div>
<div style="position:absolute;left:1262.500px;top:438.200px;width:335px;height:125.400px;background:#e5f6f2;border-radius:0 0 0 5px"></div>
<!-- separators -->
<div style="position:absolute;left:1257px;top:701.500px;width:341px;height:1.500px;background:#ebebeb"></div>
<div style="position:absolute;left:1257px;top:756.500px;width:341px;height:1.500px;background:#ebebeb"></div>
<!-- attach highlight -->
<div style="position:absolute;left:1395.300px;top:761.800px;width:60.800px;height:43.800px;background:#f0f0f0;border-radius:4px"></div>
<!-- checkbox -->
<div style="position:absolute;left:1274.200px;top:718.800px;width:22.200px;height:22px;border:1.500px solid #e0e0e0;border-radius:4px;background:#fff"></div>
<div class="t" style="left:1305.800px;top:723.600px;font-size:14px;color:#333;letter-spacing:.3px;-webkit-text-stroke:.4px #333">Background</div>
<!-- layer names -->
<div class="ln" style="left:1334.100px;top:257.0px">homeforchristmasstepperca...</div>
<div class="ls" style="left:1334.100px;top:279.7px">Basic Cut</div>
<div class="ln" style="left:1334.100px;top:322.0px">homeforchristmasstepperca...</div>
<div class="ls" style="left:1334.100px;top:344.7px">Basic Cut</div>
<div class="ln b" style="left:1334.100px;top:398.3px;letter-spacing:-.1px;color:#1c1c1c">homeforchristmasstepperc...</div>
<div class="ln" style="left:1370.300px;top:450.2px">homeforchristmasstepp...</div>
<div class="ls" style="left:1370.300px;top:472.7px">Score</div>
<div class="ln" style="left:1370.300px;top:514.2px">homeforchristmasstepp...</div>
<div class="ls" style="left:1370.300px;top:536.7px">Basic Cut</div>
<div class="ln" style="left:1334.100px;top:589.0px">Attach</div>
<div class="ln" style="left:1334.100px;top:643.8px">homeforchristmasstepperca...</div>
<div class="ls" style="left:1334.100px;top:666.9px">Basic Cut</div>
<!-- action labels -->
<div class="t" style="left:1285px;top:794.500px;font-size:12px;color:#dedede">Slice</div>
<div class="t" style="left:1338.100px;top:794.500px;font-size:12px;color:#dedede">Combine</div>
<div class="t" style="left:1408.500px;top:794.500px;font-size:12px;color:#474747;-webkit-text-stroke:.3px #474747">Attach</div>
<div class="t" style="left:1471.700px;top:794.500px;font-size:12px;color:#dedede">Flatten</div>
<div class="t" style="left:1531.900px;top:794.500px;font-size:12px;color:#dedede">Contour</div>
<!-- banner -->
<div style="position:absolute;left:1257.500px;top:813.400px;width:342.500px;height:51.200px;background:#43241f"></div>
<div class="t" style="left:1301px;top:823px;font-size:16.500px;color:#fff;-webkit-text-stroke:.45px #fff">New to working with layers? Check out</div>
<div class="t" style="left:1275.400px;top:845.400px;font-size:16.500px;color:#fff;-webkit-text-stroke:.45px #fff">this guide and more.</div>
<svg width="1600" height="1017" viewBox="0 0 1600 1017">
<!-- header icons -->
<g fill="none" stroke="#333" stroke-width="1.500" stroke-linejoin="round">
<!-- group -->
<rect x="1280" y="202.300" width="10" height="10"/>
<rect x="1286.800" y="209.100" width="10" height="10"/>
<g fill="#fff" stroke-width="1.300"><circle cx="1280" cy="202.300" r="1.700"/><circle cx="1290" cy="202.300" r="1.700"/><circle cx="1280" cy="212.300" r="1.700"/><circle cx="1290" cy="212.300" r="1.700"/><circle cx="1286.800" cy="209.100" r="1.700"/><circle cx="1296.800" cy="209.100" r="1.700"/><circle cx="1286.800" cy="219.100" r="1.700"/><circle cx="1296.800" cy="219.100" r="1.700"/></g>
<!-- duplicate -->
<path d="M1328.400 216.400 H1326.400 Q1324.800 216.400 1324.800 214.800 V204.200 Q1324.800 202.600 1326.400 202.600 H1337 Q1338.600 202.600 1338.600 204.200 V206.200"/>
<rect x="1328.400" y="206.200" width="14.200" height="14.200" rx="1.800"/>
<path d="M1335.500 209.600 V217 M1331.800 213.300 H1339.200"/>
<!-- trash -->
<path d="M1368.200 205.800 H1388.600 M1374.400 205.800 V203.400 Q1374.400 202.200 1375.600 202.200 H1381.200 Q1382.400 202.200 1382.400 203.400 V205.800 M1370.600 205.800 L1371.800 218.600 Q1372 220.400 1373.800 220.400 H1383 Q1384.800 220.400 1385 218.600 L1386.200 205.800"/>
<path d="M1376 209.800 V216.400 M1380.800 209.800 V216.400" stroke-width="1.800"/>
</g>
<!-- thumbs -->
<path d="M1325 266 H1298.600 V276.600 H1302 V284.400 H1321.400 V279" fill="none" stroke="#9a9a9a" stroke-width="1.600"/>
<path d="M1297.600 331.200 H1324.800 V344 H1321 V349.400 H1301.400 V344 H1297.600 Z" fill="#a31d27" stroke="#8e1a22" stroke-width="1"/>
<!-- group row -->
<path d="M1275.600 404.200 L1279.800 408.400 L1284 404.200" fill="none" stroke="#2e5a4e" stroke-width="1.500" stroke-linecap="round" stroke-linejoin="round"/>
<g fill="none" stroke="#2e4f47" stroke-width="1.500" stroke-linejoin="round" stroke-linecap="round">
<path d="M1301.600 400.600 V396.600 H1305.200 M1316.800 396.600 H1320.400 V400.600 M1320.400 410.800 V414.800 H1316.800 M1305.200 414.800 H1301.600 V410.800"/>
<rect x="1305.400" y="399.800" width="7.600" height="7.600" rx="1.200"/>
<rect x="1309" y="403.600" width="7.600" height="7.600" rx="1.200"/>
</g>
<!-- score thumb -->
<g stroke="#c5d3cf" stroke-width="1.200" fill="none"><path d="M1336 459.200h3M1358 459.200h3M1345 465.200h5M1336 472.200h3M1358 472.200h3"/></g>
<!-- basic cut thumb (child) -->
<rect x="1338.200" y="519" width="18.200" height="26.600" fill="#fff" stroke="#9a9a9a" stroke-width="1.500"/>
<path d="M1341.800 530 V544.600 M1352.800 530 V544.600" stroke="#c6c6c6" stroke-width="3.400"/>
<!-- attach row -->
<path d="M1277.200 590.800 L1282 595.600 L1277.200 600.400" fill="none" stroke="#333" stroke-width="1.600" stroke-linecap="round" stroke-linejoin="round"/>
<path d="M1316.600 596.400 H1306.400 Q1304.400 596.400 1304.400 594.600 Q1304.400 592.800 1306.400 592.800 H1317 Q1321.800 592.800 1321.800 596.400 Q1321.800 600 1317 600 H1305.600 Q1300.200 600 1300.200 595.200 Q1300.200 590.400 1305.600 590.400 H1317.800" fill="none" stroke="#333" stroke-width="1.600" stroke-linecap="round"/>
<!-- green thumb -->
<path d="M1298 657.200 H1325 L1324.400 659.400 L1313.600 667.200 Q1311.500 668.700 1309.400 667.200 L1298.600 659.400 Z" fill="#1c3f3a"/>
<!-- action icons (disabled) -->
<g fill="none" stroke="#e2e2e2" stroke-width="1.500" stroke-linejoin="round">
<path d="M1300.600 770.600 A6 6 0 1 0 1292.600 778.600"/><rect x="1294.600" y="772.600" width="11.200" height="11.200" rx="1"/><rect x="1294.600" y="772.600" width="5.600" height="5.600"/>
<rect x="1346.800" y="766.400" width="11.400" height="11.400" rx="1"/><circle cx="1361" cy="779.200" r="6.400"/>
<path d="M1490 765.600 V773.600 M1486.400 770.400 L1490 774 L1493.600 770.400"/>
<path d="M1481.600 775.200 L1490 779.800 L1498.400 775.200 M1481.600 779.800 L1490 784.400 L1498.400 779.800"/>
<circle cx="1553.800" cy="775.800" r="10.400" stroke-dasharray="5.200 3.600"/>
</g>
<path d="M1373.200 773.600h6.800l-3.400 3.800z" fill="#dcdcdc"/>
<!-- attach icon + hand cursor -->
<g transform="translate(0.600 3)">
<path d="M1424.600 772.800 H1419.200 Q1417.800 772.800 1417.800 771.600 Q1417.800 770.400 1419.200 770.400 H1425 Q1428 770.400 1428 772.800 Q1428 775.200 1425 775.200 H1418.600 Q1415 775.200 1415 772 Q1415 768.800 1418.600 768.800 H1425.600" fill="none" stroke="#333" stroke-width="1.500" stroke-linecap="round"/>
<path d="M1421.200 772 L1422.400 779.600 L1426 784.600 H1433.600 L1435 777.800 L1432.800 775.600 L1430.800 776.600 L1428.600 774.800 L1426.600 775.800 L1424.200 771.600 Q1422.400 770.400 1421.200 772 Z" fill="#fff" stroke="#222" stroke-width="1.300" stroke-linejoin="round"/>
<path d="M1427.400 779.200v3.200M1429.800 779.200v3.200M1432.200 779.200v3.200" stroke="#222" stroke-width="1"/>
</g>
<!-- banner eyes + close -->
<g><ellipse cx="1280.400" cy="829.800" rx="4.200" ry="5.400" fill="#fff"/><ellipse cx="1291" cy="829.800" rx="4.200" ry="5.400" fill="#fff"/><ellipse cx="1278.800" cy="830.600" rx="2" ry="3" fill="#43241f"/><ellipse cx="1289.400" cy="830.600" rx="2" ry="3" fill="#43241f"/></g>
<path d="M1587.600 838.200 L1595.200 845.800 M1595.200 838.200 L1587.600 845.800" stroke="#fff" stroke-width="1.600" stroke-linecap="round"/>
</svg>

<svg width="1600" height="1017" viewBox="0 0 1600 1017">
<!-- right arrow -->
<path d="M1082.600 374.700 L1207.500 384.200 L1174.100 343.700 L1200.600 321.200 L1274.400 406.200 L1190.800 479.900 L1166.200 452.400 L1205.500 419 L1080.600 409.100 Z" transform="translate(1.200 1.600)" fill="#8f8a86" opacity=".8"/>
<path d="M1082.600 374.700 L1207.500 384.200 L1174.100 343.700 L1200.600 321.200 L1274.400 406.200 L1190.800 479.900 L1166.200 452.400 L1205.500 419 L1080.600 409.100 Z" fill="#9d5b0c"/>
<!-- down arrow -->
<path d="M1416.800 599.500 L1451.400 597.900 L1456.800 722.700 L1492.900 685.300 L1517.900 708 L1442.700 790.200 L1360.500 715.100 L1384.300 690.300 L1422.200 723.800 Z" fill="#9d5b0c"/>
<!-- logo -->
<text transform="translate(1427.800 955.200) rotate(-90)" font-size="11.400" fill="#9db0cd" letter-spacing=".4" stroke="#9db0cd" stroke-width=".3">the</text>
<text x="1429.400" y="954.500" font-size="24.900" fill="#3f4f77" letter-spacing="-.62" stroke="#3f4f77" stroke-width=".65">BEARDED</text>
<text x="1419.600" y="978.200" font-size="25.700" font-weight="bold" fill="#a35f10" letter-spacing=".8" stroke="#a35f10" stroke-width="1">HOUSEWIFE</text>
<path d="M1560.600 982.300 C1562.500 992.500 1571 999.800 1579 999.400 C1587.500 999 1591.500 989.500 1588.200 976.800 C1588.800 983.500 1587.500 987.800 1584.800 987.600 C1583 984.500 1580 983.600 1577.600 984.200 C1574.500 983.800 1571.800 985.200 1570.600 988.200 C1566.500 988.500 1563 986 1560.600 982.300 Z" fill="#0d0d0d"/>
<path d="M1573.800 989.400 Q1577.600 986.400 1581.400 989.200 Q1577.600 988.600 1573.800 989.400 Z" fill="#fff" stroke="#fff" stroke-width=".6"/>
</svg>

</body>
</html>
